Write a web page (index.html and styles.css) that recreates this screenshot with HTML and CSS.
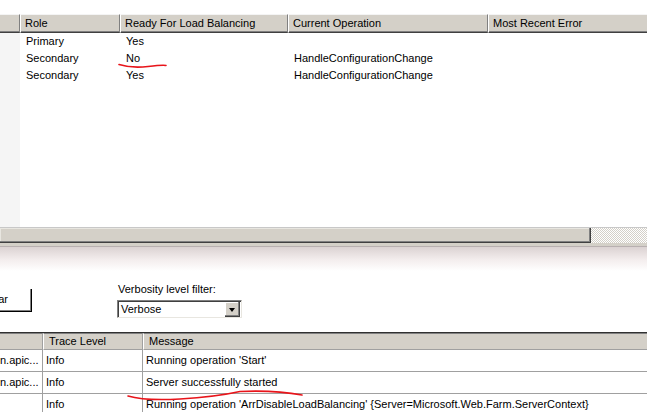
FILE: index.html
```html
<!DOCTYPE html>
<html>
<head>
<meta charset="utf-8">
<link rel="stylesheet" href="styles.css">
</head>
<body>
<div class="list">
  <div class="spacer"></div>
  <div class="hc hc-first"></div>
  <div class="hc">Role</div>
  <div class="hc">Ready For Load Balancing</div>
  <div class="hc">Current Operation</div>
  <div class="hc hc-last">Most Recent Error</div>
  <div class="strip"></div>
  <div class="dc">Primary</div><div class="dc">Yes</div><div class="dc"></div><div class="dc"></div>
  <div class="dc">Secondary</div><div class="dc">No</div><div class="dc">HandleConfigurationChange</div><div class="dc"></div>
  <div class="dc">Secondary</div><div class="dc">Yes</div><div class="dc">HandleConfigurationChange</div><div class="dc"></div>
  <div class="fill"></div>
</div>
<div class="hscroll">
  <div class="thumb"></div>
  <div class="track"></div>
</div>
<div class="pane-edge"></div>
<div class="middle">
  <div class="btn"><span>Clear</span></div>
  <div class="filter">
    <div class="filter-label">Verbosity level filter:</div>
    <div class="combo">
      <div class="combo-text">Verbose</div>
      <div class="combo-btn"><span class="tri"></span></div>
    </div>
  </div>
</div>
<div class="log">
  <div class="lh lh-first"></div>
  <div class="lh">Trace Level</div>
  <div class="lh lh-last">Message</div>
  <div class="lc lc-first">n.apic...</div><div class="lc">Info</div><div class="lc lc-last">Running operation 'Start'</div>
  <div class="lc lc-first">n.apic...</div><div class="lc">Info</div><div class="lc lc-last">Server successfully started</div>
  <div class="lc lc-first"></div><div class="lc">Info</div><div class="lc lc-last">Running operation 'ArrDisableLoadBalancing' {Server=Microsoft.Web.Farm.ServerContext}</div>
</div>
<svg class="marks" width="647" height="412" viewBox="0 0 647 412">
  <path d="M119,64.5 Q132,68.5 148,66.5 T166,65.5" fill="none" stroke="#e8141a" stroke-width="1.6" stroke-linecap="round"/>
  <path d="M128,396 Q145,401 180,399 Q215,397 240,391.5 Q275,390 302,395" fill="none" stroke="#e8141a" stroke-width="1.6" stroke-linecap="round"/>
</svg>
</body>
</html>
```
FILE: styles.css
```css
html, body {
  margin: 0;
  padding: 0;
}
body {
  width: 647px;
  height: 412px;
  overflow: hidden;
  position: relative;
  background: #fff;
  color: #000;
  font-family: "Liberation Sans", Arial, sans-serif;
  font-size: 11px;
}
.list {
  height: 227px;
  display: grid;
  grid-template-columns: 20px 100px 168px 200px 1fr;
  grid-template-rows: 14px 19px 17px 17px 17px 1fr;
  border-bottom: 1px solid #c8c8c8;
  box-sizing: content-box;
}
.spacer {
  grid-column: 1 / 6;
  background: #fff;
}
.hc {
  background: #d4d0c8;
  border-top: 1px solid #f4f4f4;
  border-left: 1px solid #fff;
  border-right: 1px solid #808080;
  border-bottom: 1px solid #404040;
  box-shadow: inset 0 -1px 0 #808080;
  box-sizing: border-box;
  padding-left: 4px;
  line-height: 16px;
  white-space: nowrap;
  overflow: hidden;
}
.hc-first {
  border-left: none;
}
.hc-last {
  border-right: none;
}
.strip {
  grid-column: 1;
  grid-row: 3 / 7;
  background: #f5f5f5;
}
.dc {
  padding-left: 6px;
  line-height: 17px;
  white-space: nowrap;
  overflow: hidden;
}
.fill {
  grid-column: 2 / 6;
}
.hscroll {
  display: flex;
  height: 15px;
}
.thumb {
  width: 591px;
  background: #d4d0c8;
  box-shadow: inset -1px -1px 0 #404040, inset -2px -2px 0 #808080, inset 1px 1px 0 #e8e6e0;
}
.track {
  flex: 1;
  background-color: #fff;
  background-image: conic-gradient(#d4d0c8 25%, #fff 0 50%, #d4d0c8 0 75%, #fff 0);
  background-size: 2px 2px;
}
.pane-edge {
  height: 3px;
  background: #d4d0c8;
  border-bottom: 1px solid #b8b0b0;
}
.middle {
  height: 85px;
  box-sizing: border-box;
  background: linear-gradient(#dbd2d2, #f4eeee 55%, #fff) top left / 100% 24px no-repeat;
  display: flex;
  align-items: flex-start;
}
.btn {
  margin-left: -31px;
  margin-top: 42px;
  width: 63px;
  flex: none;
  height: 23px;
  box-sizing: border-box;
  background: #fff;
  border-right: 1px solid #000;
  border-bottom: 1px solid #000;
  box-shadow: inset -1px -1px 0 #808080;
  display: flex;
  align-items: center;
  justify-content: flex-end;
  padding-right: 23px;
  overflow: hidden;
}
.btn span {
  line-height: 13px;
  padding-bottom: 2px;
  white-space: nowrap;
}
.filter {
  margin-left: 85px;
  margin-top: 36px;
  display: flex;
  flex-direction: column;
}
.filter-label {
  line-height: 13px;
  padding-left: 1px;
}
.combo {
  margin-top: 4px;
  width: 125px;
  height: 18px;
  box-sizing: border-box;
  border-top: 1px solid #808080;
  border-left: 1px solid #808080;
  border-right: 1px solid #e8e6e0;
  border-bottom: 1px solid #e8e6e0;
  box-shadow: inset 1px 1px 0 #404040;
  background: #fff;
  display: flex;
  padding: 1px 1px 0 1px;
}
.combo-text {
  flex: 1;
  padding-left: 2px;
  line-height: 15px;
}
.combo-btn {
  width: 15px;
  height: 15px;
  box-sizing: border-box;
  background: #d4d0c8;
  box-shadow: inset -1px -1px 0 #404040, inset -2px -2px 0 #808080, inset 1px 1px 0 #fff;
  display: flex;
  align-items: center;
  justify-content: center;
}
.tri {
  width: 0;
  height: 0;
  border-left: 3.5px solid transparent;
  border-right: 3.5px solid transparent;
  border-top: 4px solid #000;
  margin-top: 1px;
  margin-left: -1px;
}
.log {
  display: grid;
  grid-template-columns: 43px 100px 1fr;
  grid-template-rows: 17px 22px 22px 22px;
  border-top: 1px solid #303030;
}
.lh {
  background: #d4d0c8;
  border-top: 1px solid #808080;
  border-bottom: 1px solid #a0a0a0;
  border-left: 1px solid #fff;
  border-right: 1px solid #a0a0a0;
  box-sizing: border-box;
  padding-left: 5px;
  line-height: 15px;
  white-space: nowrap;
}
.lh-first {
  border-left: none;
}
.lh-last {
  border-right: none;
}
.lc {
  border-bottom: 1px solid #a0a0a0;
  border-right: 1px solid #a0a0a0;
  box-sizing: border-box;
  padding-left: 3px;
  line-height: 21px;
  white-space: nowrap;
  overflow: hidden;
}
.lc-first {
  text-align: right;
  padding-left: 0;
  padding-right: 6px;
}
.lc-last {
  border-right: none;
}
.marks {
  position: absolute;
  left: 0;
  top: 0;
  pointer-events: none;
}
```
